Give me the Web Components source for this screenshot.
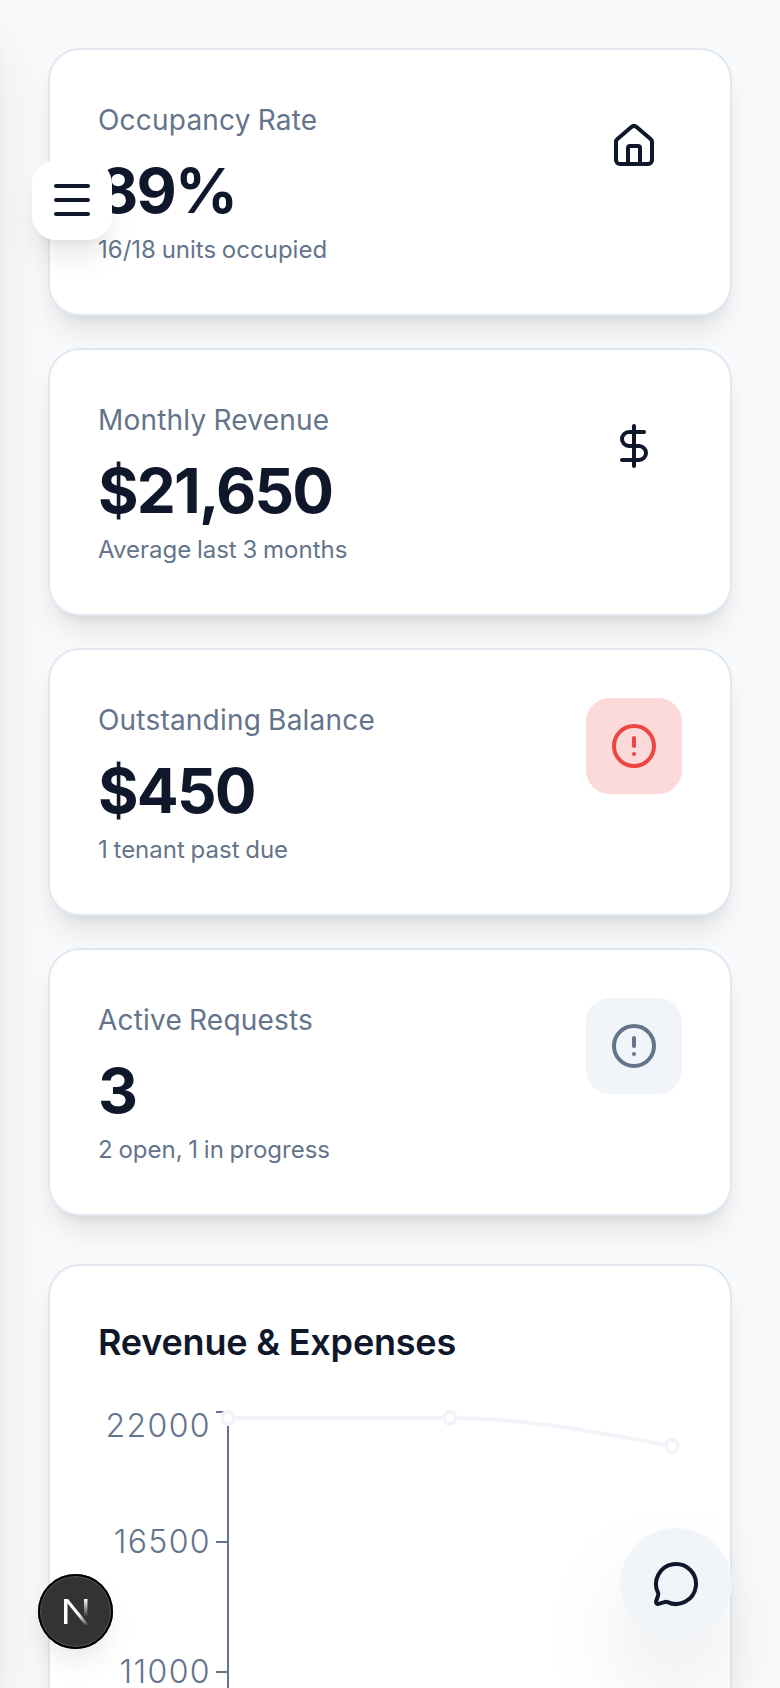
<!DOCTYPE html>
<html>
<head>
<meta charset="utf-8">
<title>Dashboard</title>
<style>
html, body { margin: 0; height: 100%; overflow: hidden; background: #f8fafc; }
body { font-family: Inter, "Liberation Sans", sans-serif; color: #0f172a; }
</style>
</head>
<body>
<side-drawer></side-drawer>
<dash-page>
  <stat-card label="Occupancy Rate" value="89%" note="16/18 units occupied" icon="house" tone="plain"></stat-card>
  <stat-card label="Monthly Revenue" value="$21,650" note="Average last 3 months" icon="dollar" tone="plain"></stat-card>
  <stat-card label="Outstanding Balance" value="$450" note="1 tenant past due" icon="alert" tone="danger"></stat-card>
  <stat-card label="Active Requests" value="3" note="2 open, 1 in progress" icon="alert" tone="muted"></stat-card>
  <chart-card slot="chart" heading="Revenue &amp; Expenses"></chart-card>
</dash-page>
<menu-button></menu-button>
<chat-button></chat-button>
<dev-badge></dev-badge>

<script>
const ICONS = {
  house: `<path d="M15 21v-8a1 1 0 0 0-1-1h-4a1 1 0 0 0-1 1v8"/><path d="M3 10a2 2 0 0 1 .709-1.528l7-5.999a2 2 0 0 1 2.582 0l7 5.999A2 2 0 0 1 21 10v9a2 2 0 0 1-2 2H5a2 2 0 0 1-2-2z"/>`,
  dollar: `<line x1="12" x2="12" y1="2" y2="22"/><path d="M17 5H9.5a3.5 3.5 0 0 0 0 7h5a3.5 3.5 0 0 1 0 7H6"/>`,
  alert: `<circle cx="12" cy="12" r="10"/><line x1="12" x2="12" y1="8" y2="12"/><line x1="12" x2="12.01" y1="16" y2="16"/>`,
  menu: `<path d="M4 5h16"/><path d="M4 12h16"/><path d="M4 19h16"/>`,
  chat: `<path d="M2.992 16.342a2 2 0 0 1 .094 1.167l-1.065 3.29a1 1 0 0 0 1.236 1.168l3.413-.998a2 2 0 0 1 1.099.092 10 10 0 1 0-4.777-4.719"/>`
};

function icon(name) {
  return `<svg width="48" height="48" viewBox="0 0 24 24" fill="none" stroke="currentColor" stroke-width="2" stroke-linecap="round" stroke-linejoin="round">${ICONS[name]}</svg>`;
}

class DashPage extends HTMLElement {
  constructor() {
    super();
    this.attachShadow({mode: "open"}).innerHTML = `<style>
      :host { display: block; padding: 48px; }
      .stats { display: grid; gap: 32px; }
      .more { margin-top: 48px; }
    </style>
    <div class="stats"><slot></slot></div>
    <div class="more"><slot name="chart"></slot></div>`;
  }
}

class StatCard extends HTMLElement {
  connectedCallback() {
    const a = n => this.getAttribute(n);
    this.attachShadow({mode: "open"}).innerHTML = `<style>
      :host { display: block; }
      .card {
        display: flex; justify-content: space-between; align-items: flex-start;
        box-sizing: border-box; height: 268px; padding: 48px;
        background: #fff; border: 2px solid #e2e8f0; border-radius: 32px;
        box-shadow: 0 20px 30px -6px rgba(0,0,0,.1), 0 8px 12px -8px rgba(0,0,0,.1);
      }
      .label { font-size: 28px; line-height: 44px; color: #64748b; letter-spacing: .2px; word-spacing: -1px; }
      .value { font-size: 62px; line-height: 80px; font-weight: 700; margin: 9px 0 3px; letter-spacing: -1.8px; }
      .note { font-size: 24px; line-height: 32px; color: #64748b; word-spacing: -1px; }
      .box {
        width: 96px; height: 96px; border-radius: 24px;
        display: flex; align-items: center; justify-content: center;
      }
      .box svg { display: block; }
      .plain { color: #0f172a; }
      .danger { background: rgba(239,68,68,.2); color: #ef4444; }
      .muted { background: #f1f5f9; color: #64748b; }
    </style>
    <div class="card">
      <div>
        <div class="label">${a("label")}</div>
        <div class="value">${a("value")}</div>
        <div class="note">${a("note")}</div>
      </div>
      <div class="box ${a("tone")}">${icon(a("icon"))}</div>
    </div>`;
  }
}

class ChartCard extends HTMLElement {
  connectedCallback() {
    this.attachShadow({mode: "open"}).innerHTML = `<style>
      :host { display: block; }
      .card {
        box-sizing: border-box; padding: 48px;
        background: #fff; border: 2px solid #e2e8f0; border-radius: 32px;
        box-shadow: 0 20px 30px -6px rgba(0,0,0,.1), 0 8px 12px -8px rgba(0,0,0,.1);
      }
      h2 { margin: 0 0 32px; font-size: 36px; line-height: 56px; font-weight: 600; letter-spacing: -.2px; }
      svg { display: block; overflow: visible; }
      text { font-size: 32px; font-weight: 300; fill: #64748b; text-anchor: end; letter-spacing: 1.4px; }
    </style>
    <div class="card">
      <h2>${this.getAttribute("heading")}</h2>
      <svg width="584" height="640" viewBox="98 1402 584 640">
        <path d="M228 1412V2000" fill="none" stroke="#64748b" stroke-width="2"/>
        <path d="M216 1412h12M216 1542h12M216 1672h12" fill="none" stroke="#64748b" stroke-width="2"/>
        <text x="211" y="1437">22000</text>
        <text x="211" y="1553">16500</text>
        <text x="211" y="1683">11000</text>
        <path d="M228 1418H450C524 1418 598 1432 672 1446" fill="none" stroke="#f1f5f9" stroke-width="4"/>
        <g fill="#fff" stroke="#f1f5f9" stroke-width="4">
          <circle cx="228" cy="1418" r="6"/>
          <circle cx="450" cy="1418" r="6"/>
          <circle cx="672" cy="1446" r="6"/>
        </g>
      </svg>
    </div>`;
  }
}

class SideDrawer extends HTMLElement {
  constructor() {
    super();
    this.attachShadow({mode: "open"}).innerHTML = `<style>
      :host {
        display: block; position: fixed; top: 0; bottom: 0; left: -560px; width: 560px;
        background: #fff;
        box-shadow: 0 40px 60px -6px rgba(0,0,0,.1), 0 16px 20px -12px rgba(0,0,0,.1);
      }
    </style>`;
  }
}

class MenuButton extends HTMLElement {
  constructor() {
    super();
    this.attachShadow({mode: "open"}).innerHTML = `<style>
      :host {
        position: fixed; left: 32px; top: 160px; width: 80px; height: 80px;
        display: flex; align-items: center; justify-content: center;
        background: #fff; border-radius: 24px; color: #0f172a;
        box-shadow: 0 20px 30px -6px rgba(0,0,0,.1), 0 8px 12px -8px rgba(0,0,0,.1);
      }
    </style>${icon("menu")}`;
  }
}

class ChatButton extends HTMLElement {
  constructor() {
    super();
    this.attachShadow({mode: "open"}).innerHTML = `<style>
      :host {
        position: fixed; right: 48px; bottom: 48px; width: 112px; height: 112px;
        display: flex; align-items: center; justify-content: center;
        background: #f1f5f9; border-radius: 50%; color: #0f172a;
        box-shadow: 0 50px 100px -24px rgba(0,0,0,.25);
      }
    </style>${icon("chat")}`;
  }
}

class DevBadge extends HTMLElement {
  constructor() {
    super();
    this.attachShadow({mode: "open"}).innerHTML = `<style>
      :host {
        position: fixed; left: 38px; top: 1574px; width: 75px; height: 75px;
        box-sizing: border-box; display: flex; align-items: center; justify-content: center;
        background: #333; border-radius: 50%;
        box-shadow: inset 0 0 0 2px #000, inset 0 0 0 3px #555, 0 16px 32px -8px rgba(0,0,0,.12);
      }
    </style>
    <svg width="28" height="28" viewBox="0 0 28 28" fill="none">
      <defs>
        <linearGradient id="a" x1="0" y1="0" x2="1" y2="1"><stop offset=".6" stop-color="#fff"/><stop offset="1" stop-color="#fff" stop-opacity="0"/></linearGradient>
        <linearGradient id="b" x1="0" y1="0" x2="0" y2="1"><stop offset="0" stop-color="#fff"/><stop offset=".75" stop-color="#fff" stop-opacity="0"/></linearGradient>
      </defs>
      <rect x="2" y="1" width="3.5" height="25" fill="#fff"/>
      <polygon points="2,1 6,1 27,27 23,27" fill="url(#a)"/>
      <rect x="22" y="1" width="3.5" height="24" fill="url(#b)"/>
    </svg>`;
  }
}

customElements.define("dash-page", DashPage);
customElements.define("stat-card", StatCard);
customElements.define("chart-card", ChartCard);
customElements.define("side-drawer", SideDrawer);
customElements.define("menu-button", MenuButton);
customElements.define("chat-button", ChatButton);
customElements.define("dev-badge", DevBadge);
</script>
</body>
</html>
